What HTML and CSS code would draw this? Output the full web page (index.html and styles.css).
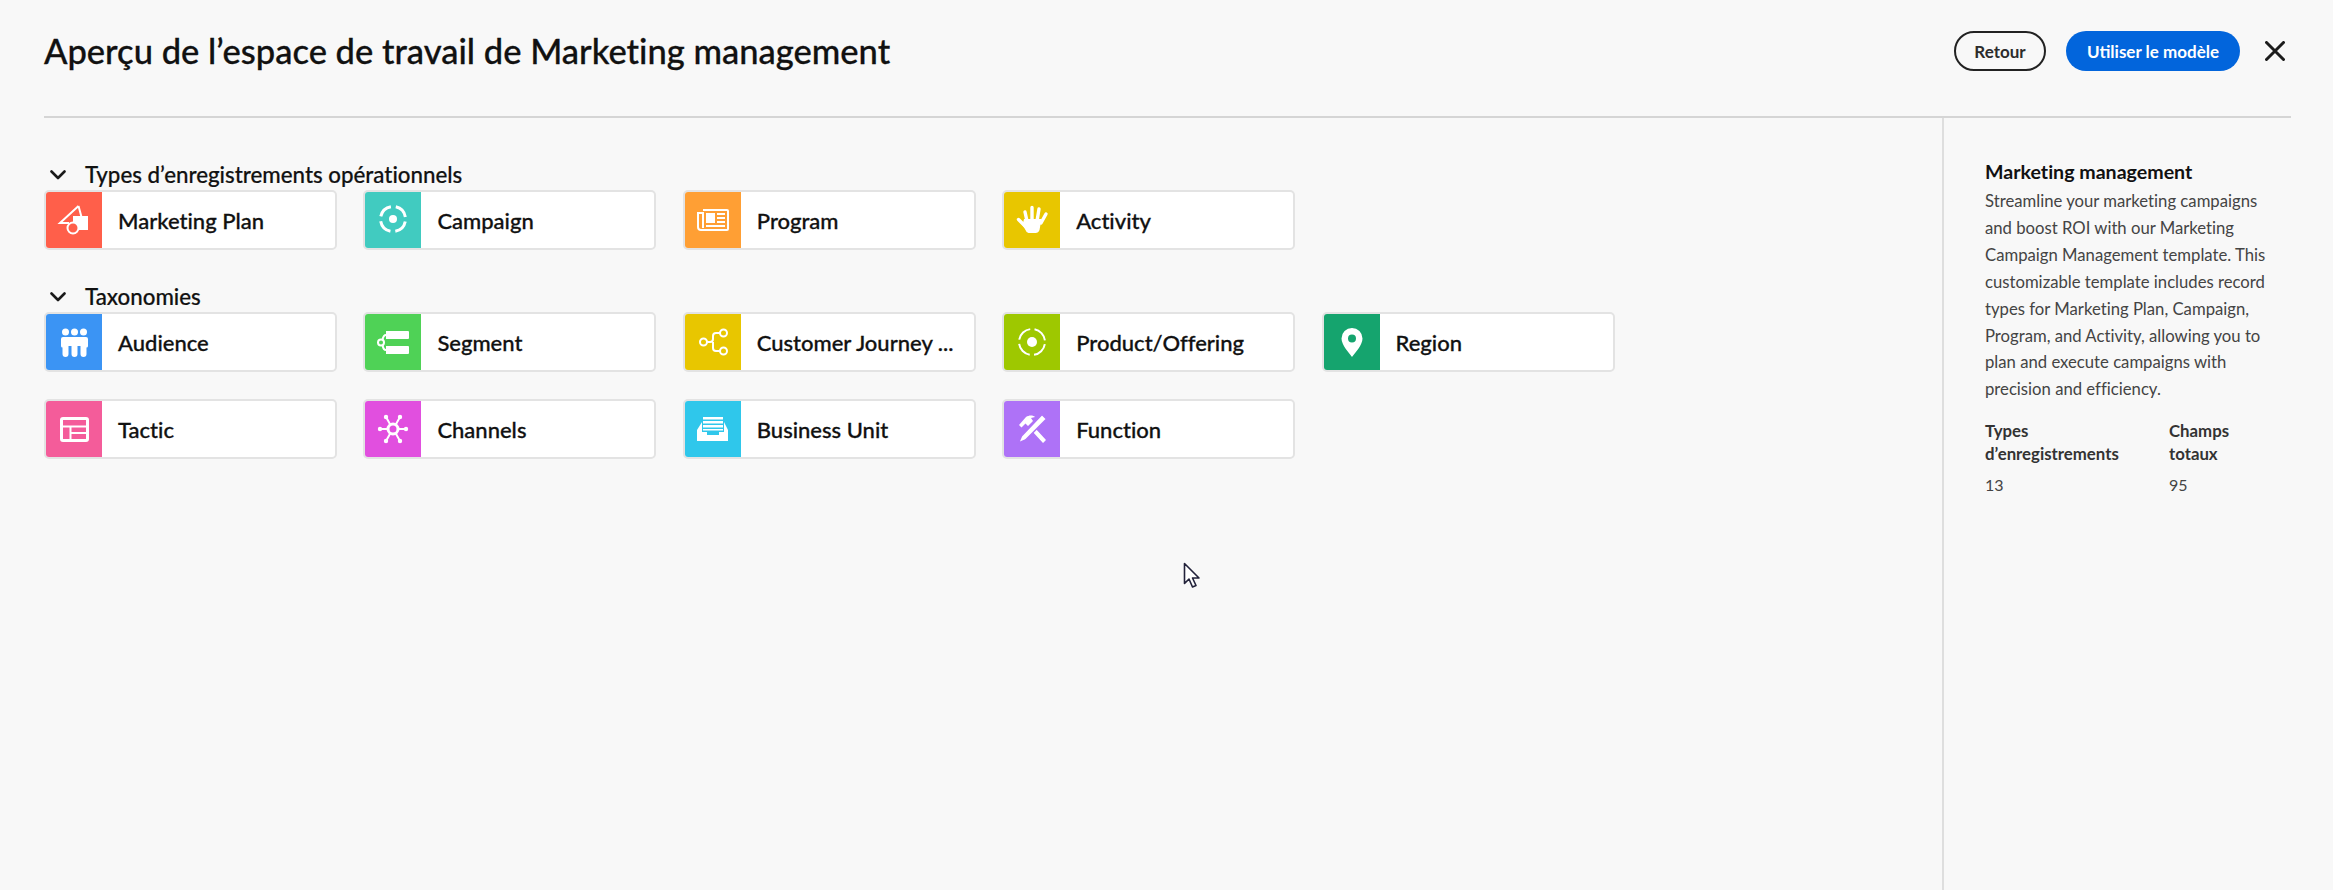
FILE: index.html
```html
<!DOCTYPE html>
<html lang="fr">
  <head>
    <meta charset="utf-8">
    <title>Aperçu de l’espace de travail</title>
    <link rel="stylesheet" href="styles.css">
  </head>
  <body>
    <div class="page">

      <div class="header">
        <h1 class="title">Aperçu de l’espace de travail de Marketing management</h1>
        <div class="actions">
          <button class="btn btnBack">Retour</button>
          <button class="btn btnUse">Utiliser le modèle</button>
          <svg class="close" width="20" height="20" viewBox="0 0 20 20"><path d="M1.500 1.500l17 17M18.500 1.500l-17 17"/></svg>
        </div>
      </div>

      <div class="main">
        <div class="content">

          <div class="section">
            <div class="sectionTitle">
              <svg class="chevron" width="16" height="10" viewBox="0 0 16 10"><path d="M1.500 1.500L8 8l6.500-6.500"/></svg>
              Types d’enregistrements opérationnels
            </div>
            <div class="cards">
              <div class="card">
                <div class="tile red">
                  <svg width="56" height="56" viewBox="0 0 56 56">
                    <path class="line" d="M32.500 14L14 31h9M32.500 14l3 11"/>
                    <rect class="fill" x="27" y="24" width="15" height="14"/>
                    <circle class="hole" cx="27" cy="36" r="5.500"/>
                  </svg>
                </div>
                <span class="name">Marketing Plan</span>
              </div>
              <div class="card">
                <div class="tile teal">
                  <svg width="56" height="56" viewBox="0 0 56 56">
                    <circle class="thick" cx="28" cy="27" r="12.500" stroke-dasharray="14.630 5" stroke-dashoffset="-2.500"/>
                    <circle class="fill" cx="28" cy="27" r="4"/>
                  </svg>
                </div>
                <span class="name">Campaign</span>
              </div>
              <div class="card">
                <div class="tile orange">
                  <svg width="56" height="56" viewBox="0 0 56 56">
                    <path class="line" d="M18 18h24a1 1 0 0 1 1 1v18a1 1 0 0 1-1 1H16a3 3 0 0 1-3-3V21h5v15"/>
                    <path class="fill" d="M21 21h9v10h-9zM32 21h8v2h-8zM32 25h8v2h-8zM32 29h8v2h-8zM21 33h19v2H21z"/>
                  </svg>
                </div>
                <span class="name">Program</span>
              </div>
              <div class="card">
                <div class="tile yellow">
                  <svg width="56" height="56" viewBox="0 0 56 56">
                    <path class="finger" d="M14.500 27.500L21 34M21 20l2 9M28 15.500V29M35 17l-2 12M42 22l-5 9"/>
                    <path class="fill" d="M20 27h17.500l-2 11q-1 3-4 3h-7q-2 0-3-3l-3-5z"/>
                  </svg>
                </div>
                <span class="name">Activity</span>
              </div>
            </div>
          </div>

          <div class="section">
            <div class="sectionTitle">
              <svg class="chevron" width="16" height="10" viewBox="0 0 16 10"><path d="M1.500 1.500L8 8l6.500-6.500"/></svg>
              Taxonomies
            </div>
            <div class="cards">
              <div class="card">
                <div class="tile blue">
                  <svg width="56" height="56" viewBox="0 0 56 56">
                    <circle class="fill" cx="19.500" cy="18" r="3.500"/>
                    <circle class="fill" cx="28.500" cy="18" r="3.500"/>
                    <circle class="fill" cx="37.500" cy="18" r="3.500"/>
                    <path class="fill" d="M15 25a2 2 0 0 1 2-2h23a2 2 0 0 1 2 2v7a1.500 1.500 0 0 1-3 0H18a1.500 1.500 0 0 1-3 0z"/>
                    <path class="finger wide" d="M19.500 28v12M28.500 28v12M37.500 28v12"/>
                  </svg>
                </div>
                <span class="name">Audience</span>
              </div>
              <div class="card">
                <div class="tile green">
                  <svg width="56" height="56" viewBox="0 0 56 56">
                    <path class="fill" d="M21 17h22a1 1 0 0 1 1 1v6a1 1 0 0 1-1 1H21zM21 32h22a1 1 0 0 1 1 1v6a1 1 0 0 1-1 1H21z"/>
                    <circle class="line" cx="16" cy="28.500" r="3"/>
                    <path class="line" d="M17.500 26c.5-3 1.500-5 3.500-5M17.500 31c.5 3 1.500 5 3.500 5"/>
                  </svg>
                </div>
                <span class="name">Segment</span>
              </div>
              <div class="card">
                <div class="tile yellow">
                  <svg width="56" height="56" viewBox="0 0 56 56">
                    <circle class="line" cx="18.500" cy="28" r="3.500"/>
                    <circle class="line" cx="38.500" cy="19" r="3.500"/>
                    <circle class="line" cx="38.500" cy="37" r="3.500"/>
                    <path class="line" d="M22 28h3c2 0 3-1 3-3v-3c0-2 1-3 3-3h4M28 28v6c0 2 1 3 3 3h4"/>
                  </svg>
                </div>
                <span class="name">Customer Journey ...</span>
              </div>
              <div class="card">
                <div class="tile lime">
                  <svg width="56" height="56" viewBox="0 0 56 56">
                    <circle class="line" cx="28" cy="28" r="13" stroke-dasharray="16 4.420" stroke-dashoffset="-2.200"/>
                    <circle class="fill" cx="28" cy="28" r="5"/>
                  </svg>
                </div>
                <span class="name">Product/Offering</span>
              </div>
              <div class="card">
                <div class="tile emerald">
                  <svg width="56" height="56" viewBox="0 0 56 56">
                    <path class="fill" fill-rule="evenodd" d="M28 14a10.500 10.500 0 0 0-10.500 10.500C17.500 31 25 39 28 43c3-4 10.500-12 10.500-18.500A10.500 10.500 0 0 0 28 14zm0 14.500a4 4 0 1 1 0-8 4 4 0 0 1 0 8z"/>
                  </svg>
                </div>
                <span class="name">Region</span>
              </div>
              <div class="card">
                <div class="tile pink">
                  <svg width="56" height="56" viewBox="0 0 56 56">
                    <rect class="thick" x="15.500" y="17.500" width="26" height="22" rx="1.500"/>
                    <path class="line" d="M15 25.500h27M24.500 25.500v14M24.500 32h17"/>
                  </svg>
                </div>
                <span class="name">Tactic</span>
              </div>
              <div class="card">
                <div class="tile magenta">
                  <svg width="56" height="56" viewBox="0 0 56 56">
                    <circle class="thick" cx="28" cy="28" r="5"/>
                    <path class="line" d="M15 28h8M33 28h8M21 16l4.500 8M35 16l-4.500 8M21 40l4.500-8M35 40l-4.500-8"/>
                    <g class="fill">
                      <circle cx="15" cy="28" r="2.200"/><circle cx="41" cy="28" r="2.200"/>
                      <circle cx="21" cy="16" r="2.200"/><circle cx="35" cy="16" r="2.200"/>
                      <circle cx="21" cy="40" r="2.200"/><circle cx="35" cy="40" r="2.200"/>
                    </g>
                  </svg>
                </div>
                <span class="name">Channels</span>
              </div>
              <div class="card">
                <div class="tile sky">
                  <svg width="56" height="56" viewBox="0 0 56 56">
                    <path class="fill" d="M18 16h20v2.500H18zM18 20h20v2.500H18zM18 24h20v2.500H18zM18 28h20v1.500H18z"/>
                    <path class="fill" d="M12 29l5-8v10h5v3h12v-3h5V21l4 8v11H12z"/>
                  </svg>
                </div>
                <span class="name">Business Unit</span>
              </div>
              <div class="card">
                <div class="tile purple">
                  <svg width="56" height="56" viewBox="0 0 56 56">
                    <path class="fill" d="M15 24l7-8c3-2 7-2 9 0l-4 1 2 3-5 5-2.500-2.500-4 4zM28 30l3-3 11 12-3 3z"/>
                    <path class="cut" d="M38 13.500l4.500 4.500-21 21-7 3 3-7z"/>
                  </svg>
                </div>
                <span class="name">Function</span>
              </div>
            </div>
          </div>

        </div>

        <div class="sidebar">
          <div class="sideTitle">Marketing management</div>
          <p class="sideText">Streamline your marketing campaigns and boost ROI with our Marketing Campaign Management template. This customizable template includes record types for Marketing Plan, Campaign, Program, and Activity, allowing you to plan and execute campaigns with precision and efficiency.</p>
          <div class="stats">
            <div class="statLabel">Types d’enregistrements</div>
            <div class="statLabel">Champs totaux</div>
            <div class="statValue">13</div>
            <div class="statValue">95</div>
          </div>
        </div>
      </div>

    </div>

    <svg class="pointer" width="18" height="28" viewBox="0 0 18 28">
      <path d="M1.500 1.500v20l4.500-4.500 3.500 8 3.500-1.500-3.500-7.500h6.500z"/>
    </svg>
  </body>
</html>
```

FILE: styles.css
```css
html,body{
  margin: 0px;
  padding: 0px;
  height: 100%;
  overflow: hidden;
  font-family: Lato, "Noto Sans", sans-serif;
  font-variant-ligatures: no-common-ligatures;
  background-color: #F8F8F8;
  color: #111;
}

.page{
  height: 100%;
  display: flex;
  flex-direction: column;
  padding-left: 44px;
  padding-right: 42px;
}

.header{
  height: 118px;
  flex: none;
  box-sizing: border-box;
  display: flex;
  align-items: center;
  justify-content: space-between;
  padding-bottom: 14px;
  border-bottom: 2px solid #D5D5D5;
}

.title{
  margin: 0px;
  font-size: 34.500px;
  font-weight: 500;
  line-height: 44px;
  -webkit-text-stroke: 0.3px #111;
}

.actions{
  display: flex;
  align-items: center;
}

.btn{
  height: 40px;
  border-radius: 20px;
  font-family: inherit;
  font-size: 17px;
  font-weight: 700;
  padding: 0px;
}

.btnBack{
  width: 92px;
  background-color: transparent;
  border: 2px solid #222;
  color: #2C2C2C;
}

.btnUse{
  width: 174px;
  margin-left: 20px;
  background-color: #0265DC;
  border: none;
  color: #FFF;
}

.close{
  margin-left: 25px;
  margin-right: 6px;
}

.close path{
  fill: none;
  stroke: #1C1C1C;
  stroke-width: 3;
  stroke-linecap: round;
}

.main{
  flex: 1;
  display: flex;
  min-height: 0;
}

.content{
  flex: 1;
  padding-top: 45px;
}

.section{
  margin-bottom: 35px;
}

.sectionTitle{
  display: flex;
  align-items: center;
  height: 24px;
  margin-bottom: 3px;
  font-size: 22.300px;
  font-weight: 500;
  line-height: 24px;
  -webkit-text-stroke: 0.2px #111;
}

.chevron{
  margin-left: 6px;
  margin-right: 19px;
}

.chevron path{
  fill: none;
  stroke: #1A1A1A;
  stroke-width: 2.600;
  stroke-linecap: round;
  stroke-linejoin: round;
}

.cards{
  display: grid;
  grid-template-columns: repeat(5, 293px);
  column-gap: 26.400px;
  row-gap: 27px;
}

.card{
  height: 60px;
  box-sizing: border-box;
  display: flex;
  align-items: center;
  background-color: #FFF;
  border: 2px solid #E3E3E3;
  border-radius: 5px;
  overflow: hidden;
}

.tile{
  width: 56px;
  height: 56px;
  flex: none;
}

.tile svg{
  display: block;
}

.name{
  margin-left: 16px;
  font-size: 22px;
  font-weight: 500;
  white-space: nowrap;
  -webkit-text-stroke: 0.3px #111;
}

.fill{
  fill: #FFF;
}

.line{
  fill: none;
  stroke: #FFF;
  stroke-width: 2;
}

.thick{
  fill: none;
  stroke: #FFF;
  stroke-width: 3;
}

.finger{
  fill: none;
  stroke: #FFF;
  stroke-width: 3.400;
  stroke-linecap: round;
}

.finger.wide{
  stroke-width: 6;
}

.hole{
  fill: #FF5F4A;
  stroke: #FFF;
  stroke-width: 2;
}

.cut{
  fill: #FFF;
  stroke: #AE72F7;
  stroke-width: 1.500;
}

.red{background-color: #FF5F4A;}
.teal{background-color: #41CBC0;}
.orange{background-color: #FF9F34;}
.yellow{background-color: #E8C600;}
.blue{background-color: #3B94F4;}
.green{background-color: #4FD256;}
.lime{background-color: #9EC800;}
.emerald{background-color: #15A46E;}
.pink{background-color: #F45C9A;}
.magenta{background-color: #E14FDF;}
.sky{background-color: #2FC7EB;}
.purple{background-color: #AE72F7;}

.sidebar{
  width: 391px;
  flex: none;
  box-sizing: border-box;
  margin-right: -42px;
  padding: 42px 60px 0px 41px;
  border-left: 2px solid #DEDEDE;
}

.sideTitle{
  font-size: 19.600px;
  font-weight: 700;
  line-height: 24px;
}

.sideText{
  margin: 4px 0px 0px 0px;
  font-size: 16.700px;
  line-height: 26.900px;
  color: #444;
}

.stats{
  display: grid;
  grid-template-columns: 184px 1fr;
  margin-top: 16px;
}

.statLabel{
  padding-right: 20px;
  font-size: 16.800px;
  font-weight: 700;
  line-height: 23px;
  color: #333;
}

.statValue{
  margin-top: 8px;
  font-size: 16px;
  line-height: 23px;
  color: #444;
}

.pointer{
  position: absolute;
  left: 1183px;
  top: 562px;
}

.pointer path{
  fill: #FFF;
  stroke: #22223A;
  stroke-width: 1.600;
  stroke-linejoin: round;
}
```
